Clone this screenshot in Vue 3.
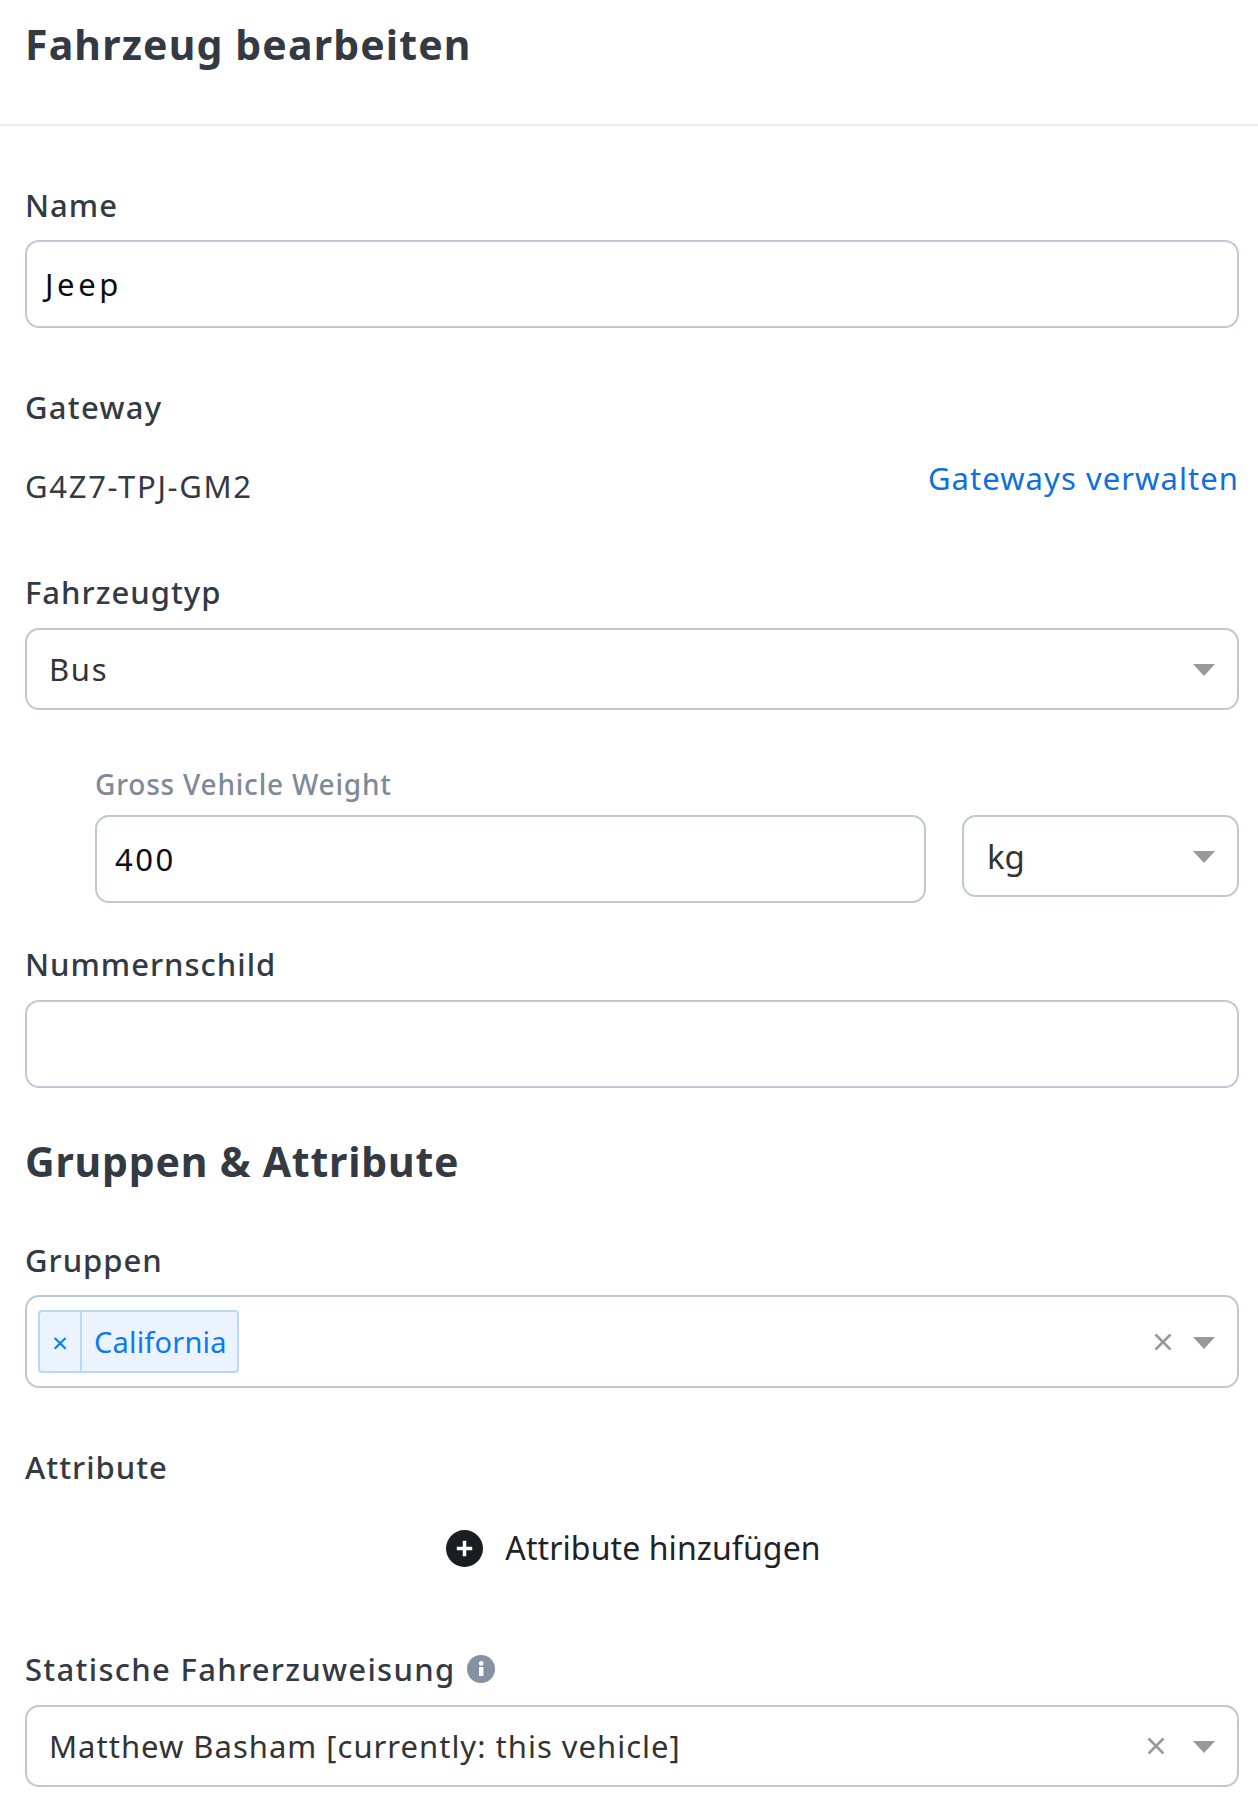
<script setup>
</script>

<template>
  <div class="page">
    <header class="head"><h1>Fahrzeug bearbeiten</h1></header>
    <main class="form">
      <section class="field name-field">
        <label>Name</label>
        <div class="input"><span class="jeep">Jeep</span></div>
      </section>

      <section class="field gateway-field">
        <label class="wide">Gateway</label>
        <div class="gateway-row">
          <span class="gateway-id">G4Z7-TPJ-GM2</span>
          <a class="link">Gateways verwalten</a>
        </div>
      </section>

      <section class="field type-field">
        <label>Fahrzeugtyp</label>
        <div class="select"><span class="bus">Bus</span><i class="caret"></i></div>
      </section>

      <section class="weight">
        <label class="sub-label">Gross Vehicle Weight</label>
        <div class="weight-row">
          <div class="input"><span>400</span></div>
          <div class="select unit"><span class="unit-text">kg</span><i class="caret"></i></div>
        </div>
      </section>

      <section class="field plate-field">
        <label>Nummernschild</label>
        <div class="input"></div>
      </section>

      <h2>Gruppen &amp; Attribute</h2>

      <section class="field groups-field">
        <label>Gruppen</label>
        <div class="multi">
          <div class="tag"><span class="tag-x">×</span><span class="tag-text">California</span></div>
          <svg class="clear clear-multi" viewBox="0 0 18 18" width="18" height="18"><path d="M1.5 1.5 L16.5 16.5 M16.5 1.5 L1.5 16.5" stroke="#999" stroke-width="2.6" fill="none"/></svg>
          <i class="caret"></i>
        </div>
      </section>

      <section class="field attr-field">
        <label>Attribute</label>
        <div class="add">
          <svg viewBox="0 0 36 36" width="37" height="37"><circle cx="18" cy="18" r="18" fill="#1a1d21"/><path d="M18 10.5 V25.5 M10.5 18 H25.5" stroke="#fff" stroke-width="3.4"/></svg>
          <span>Attribute hinzufügen</span>
        </div>
      </section>

      <section class="field driver-field">
        <label class="with-info wide"><span>Statische Fahrerzuweisung</span>
          <svg viewBox="0 0 28 28" width="28" height="28"><circle cx="14" cy="14" r="14" fill="#8592a3"/><rect x="12" y="12" width="4.4" height="9" fill="#fff"/><circle cx="14.2" cy="8.4" r="2.4" fill="#fff"/></svg>
        </label>
        <div class="select">
          <span>Matthew Basham [currently: this vehicle]</span>
          <svg class="clear clear-driver" viewBox="0 0 18 18" width="18" height="18"><path d="M1.5 1.5 L16.5 16.5 M16.5 1.5 L1.5 16.5" stroke="#999" stroke-width="2.6" fill="none"/></svg>
          <i class="caret"></i>
        </div>
      </section>
    </main>
  </div>
</template>

<style>
body { margin: 0; background: #fff; }
</style>

<style scoped>
.page { width: 1258px; height: 1802px; overflow: hidden; font-family: "Noto Sans", "Open Sans", sans-serif; color: #333a44; letter-spacing: 1px; }
.head { height: 124px; border-bottom: 2px solid #e9ebef; padding-left: 25px; }
h1 { margin: 0; padding-top: 17px; font-size: 41px; line-height: 54px; font-weight: 700; color: #333a44; letter-spacing: 1.15px; }
.form { padding: 0 19px 0 25px; }
label { display: block; font-size: 31px; line-height: 40px; font-weight: 500; color: #333a44; letter-spacing: 1px; }
label.wide { letter-spacing: 1.3px; }
.field > label { margin-bottom: 16px; }
.name-field { padding-top: 59px; }
.name-field > label, .groups-field > label { margin-bottom: 15px; }
.input { height: 88px; box-sizing: border-box; border: 2px solid #bfc9d4; border-radius: 14px; display: flex; align-items: center; padding-left: 18px; font-size: 31px; color: #0b0d10; letter-spacing: 2.5px; }
.jeep { letter-spacing: 3.6px; }
.select, .multi { position: relative; box-sizing: border-box; border: 2px solid #bfc9d4; border-radius: 14px; display: flex; align-items: center; font-size: 31px; color: #333; }
.select { height: 82px; padding-left: 22px; }
.bus { letter-spacing: 1.7px; }
.caret { position: absolute; right: 22px; top: 50%; margin-top: -5px; width: 0; height: 0; border-left: 11px solid transparent; border-right: 11px solid transparent; border-top: 12px solid #999; }
.clear { position: absolute; top: 50%; margin-top: -9px; }
.clear-multi { right: 65px; }
.clear-driver { right: 72px; }
.gateway-field { margin-top: 59px; }
.gateway-row { display: flex; justify-content: space-between; align-items: flex-start; margin-top: 34px; }
.gateway-id { font-size: 31px; line-height: 42px; margin-top: 4px; color: #333a44; letter-spacing: 1.7px; }
.link { font-size: 31px; line-height: 42px; color: #0d6fe0; margin-top: -4px; letter-spacing: 1.05px; }
.type-field { margin-top: 65px; }
.weight { margin-top: 56px; padding-left: 70px; }
.sub-label { font-size: 28px; line-height: 36px; color: #7e8a9a; margin-bottom: 13px; letter-spacing: 0.8px; }
.weight-row { display: flex; gap: 36px; align-items: flex-start; }
.weight-row .input { flex: 1; }
.unit { width: 277px; flex: none; }
.unit-text { font-size: 33px; letter-spacing: 0; margin-left: 1px; }
.plate-field { margin-top: 41px; }
h2 { margin: 46px 0 0; font-size: 41px; line-height: 54px; font-weight: 700; color: #333a44; letter-spacing: 0.8px; }
.groups-field { margin-top: 52px; }
.multi { height: 93px; padding-left: 11px; }
.tag { display: flex; height: 63px; box-sizing: border-box; border: 2px solid #b9d7fb; border-radius: 4px; background: #ebf3fe; color: #0a7bf5; font-size: 29px; align-items: center; letter-spacing: 0.2px; }
.tag-x { width: 40px; height: 100%; display: flex; align-items: center; justify-content: center; border-right: 2px solid #b9d7fb; font-size: 28px; }
.tag-text { padding: 0 10px 0 12px; }
.attr-field { margin-top: 59px; }
.add { display: flex; justify-content: center; align-items: center; gap: 22px; margin-top: 39px; font-size: 32px; line-height: 44px; color: #1f2328; letter-spacing: 0.1px; margin-left: 3px; }
.driver-field { margin-top: 79px; }
.with-info { display: flex; align-items: center; gap: 12px; }
</style>
